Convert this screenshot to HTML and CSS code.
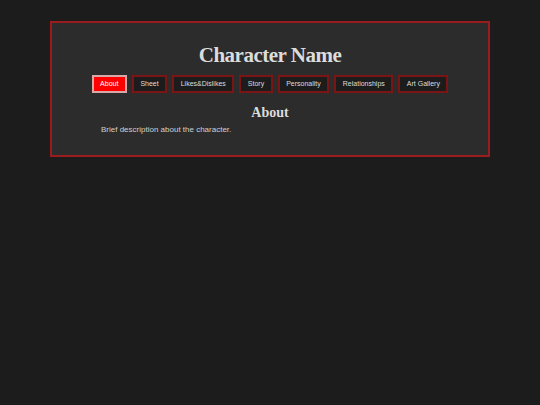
FILE: index.html
```html
<html>
    <head>
        <link rel="stylesheet" href="styles.css">
        <title>Character Name</title>
    </head>
    <body>
        <div id="card">
            <h1 class="name">Character Name</h1>
            <div class="tabs">
                <button class="tab active">About</button>
                <button class="tab">Sheet</button>
                <button class="tab">Likes&amp;Dislikes</button>
                <button class="tab">Story</button>
                <button class="tab">Personality</button>
                <button class="tab">Relationships</button>
                <button class="tab">Art Gallery</button>
            </div>
            <div class="section">
                <h2>About</h2>
                <p>Brief description about the character.</p>
            </div>
        </div>
    </body>
</html>
```

FILE: styles.css
```css
body {
    margin: 0;
    padding-top: 21px;
    background-color: #1c1c1c;
    color: #dcdcdc;
    font-family: "Liberation Sans", Arial, sans-serif;
}
#card {
    width: 436px;
    margin: 0 auto;
    border: 2px solid #9b1c1c;
    background-color: #2c2c2c;
    padding: 20px 0 20px 0;
}
.name {
    font-family: "Liberation Serif", serif;
    font-size: 21px;
    line-height: 24px;
    letter-spacing: -0.5px;
    text-align: center;
    margin: 0 0 8px 0;
    color: #dcdcdc;
}
.tabs {
    display: flex;
    justify-content: center;
    gap: 5px;
}
.tab {
    background-color: #1c1c1c;
    color: #dcdcdc;
    border: 2px solid #7a1515;
    font-family: "Liberation Sans", Arial, sans-serif;
    font-size: 7px;
    line-height: 10px;
    height: 18px;
    padding: 0 6.5px;
}
.tab.active {
    background-color: #ff0000;
    border-color: #d8a8a8;
    color: #fff;
}
.section {
    padding: 0 49px;
}
.section h2 {
    font-family: "Liberation Serif", serif;
    font-size: 14px;
    line-height: 16px;
    text-align: center;
    margin: 12px 0 4px 0;
}
.section p {
    font-size: 8px;
    line-height: 10px;
    margin: 0;
    color: #d0d0d0;
}
```
